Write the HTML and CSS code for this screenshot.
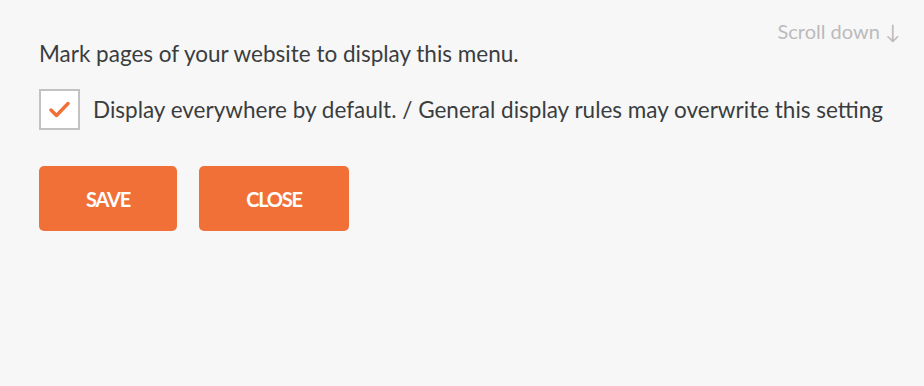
FILE: index.html
```html
<!DOCTYPE html>
<html lang="en">
<head>
  <meta charset="UTF-8">
  <title>Display settings</title>
  <link rel="stylesheet" href="styles.css">
</head>
<body>

<div class="panel">
  <div class="scroll-hint">Scroll down &#8595;</div>

  <p class="intro">Mark pages of your website to display this menu.</p>

  <label class="check-row">
    <span class="box">
      <svg width="21" height="17" viewBox="0 0 21 17">
        <path d="M2 9 L7.5 14.5 L19 2.5" fill="none" stroke="#f07038" stroke-width="3.4" stroke-linecap="round" stroke-linejoin="round"/>
      </svg>
    </span>
    <span>Display everywhere by default. / General display rules may overwrite this setting</span>
  </label>

  <div class="buttons">
    <button class="btn save">SAVE</button>
    <button class="btn close">CLOSE</button>
  </div>
</div>

</body>
</html>
```

FILE: styles.css
```css
body {
  margin: 0;
  background-color: #f7f7f7;
  font-family: Lato, "Open Sans", sans-serif;
  color: #3a3d40;
}
.panel {
  padding: 40px 39px;
}
.scroll-hint {
  position: absolute;
  top: 19px;
  right: 24px;
  font-size: 20px;
  color: #bbbbbb;
}
.intro {
  margin: 0;
  font-size: 22.5px;
  line-height: 28px;
}
.check-row {
  display: flex;
  align-items: center;
  gap: 13px;
  margin-top: 21px;
  font-size: 22.5px;
}
.box {
  width: 37px;
  height: 37px;
  border: 2px solid #c2c2c2;
  background: white;
  display: flex;
  align-items: center;
  justify-content: center;
}
.buttons {
  display: flex;
  gap: 22px;
  margin-top: 36px;
}
.btn {
  height: 65px;
  border: none;
  border-radius: 5px;
  background-color: #f07038;
  color: white;
  font-family: Lato, sans-serif;
  font-weight: bold;
  font-size: 20px;
  letter-spacing: -1.2px;
  cursor: pointer;
}
.save {
  width: 138px;
}
.close {
  width: 150px;
}
```
